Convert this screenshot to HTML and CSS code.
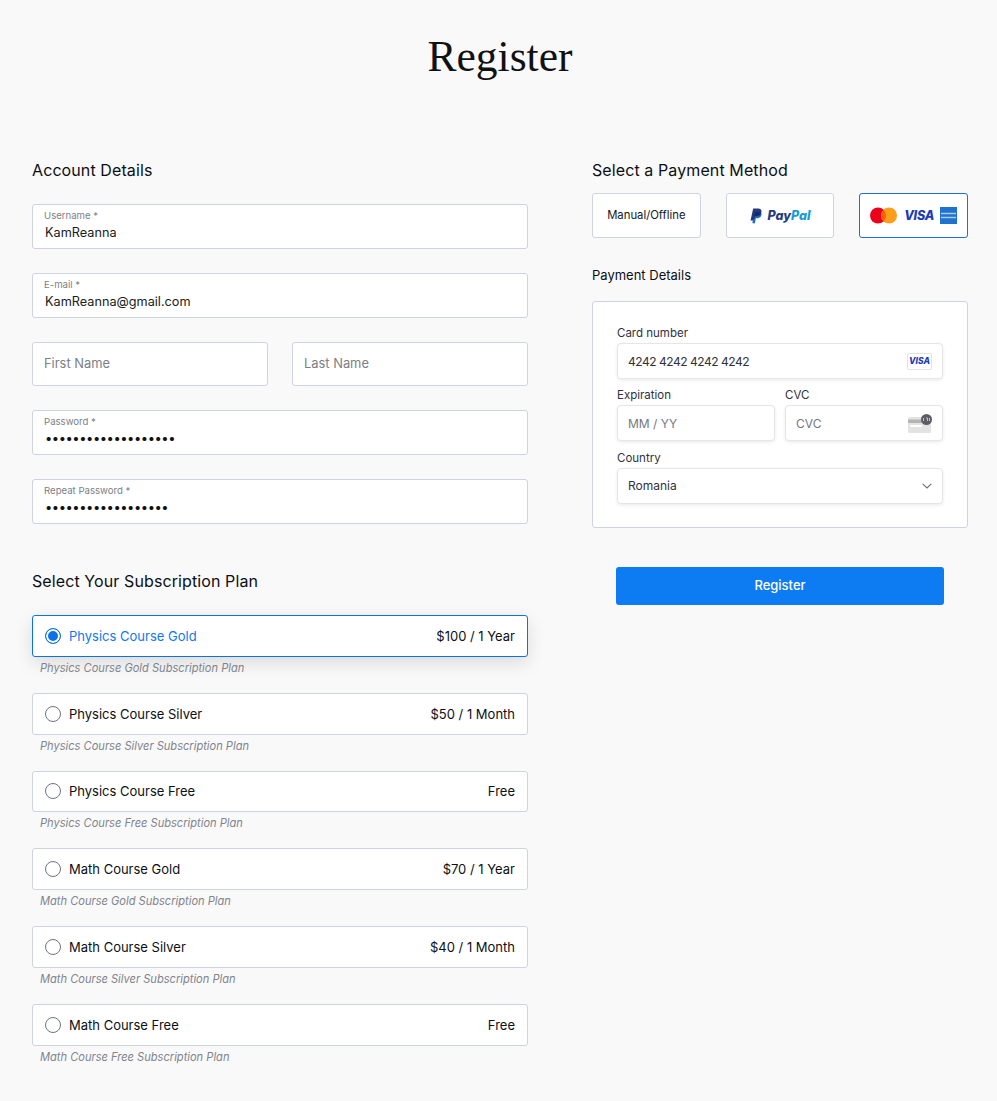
FILE: index.html
```html
<!DOCTYPE html>
<html lang="en">
<head>
<meta charset="utf-8">
<title>Register</title>
<link rel="stylesheet" href="styles.css">
</head>
<body>
<h1 class="title">Register</h1>
<main class="columns">
  <section class="col-left">
    <h2 class="heading">Account Details</h2>
    <div class="fields">
      <div class="field"><span class="field-label">Username *</span><span class="field-value">KamReanna</span></div>
      <div class="field"><span class="field-label">E-mail *</span><span class="field-value">KamReanna@gmail.com</span></div>
      <div class="name-row">
        <div class="field field-empty">First Name</div>
        <div class="field field-empty">Last Name</div>
      </div>
      <div class="field"><span class="field-label">Password *</span><span class="field-value dots">•••••••••••••••••••</span></div>
      <div class="field"><span class="field-label">Repeat Password *</span><span class="field-value dots">••••••••••••••••••</span></div>
    </div>
    <h2 class="heading plans-heading">Select Your Subscription Plan</h2>
    <div class="plans">
      <div class="plan">
        <div class="plan-card plan-active"><span class="radio radio-on"></span><span class="plan-name">Physics Course Gold</span><span class="plan-price">$100 / 1 Year</span></div>
        <p class="plan-desc">Physics Course Gold Subscription Plan</p>
      </div>
      <div class="plan">
        <div class="plan-card"><span class="radio"></span><span class="plan-name">Physics Course Silver</span><span class="plan-price">$50 / 1 Month</span></div>
        <p class="plan-desc">Physics Course Silver Subscription Plan</p>
      </div>
      <div class="plan">
        <div class="plan-card"><span class="radio"></span><span class="plan-name">Physics Course Free</span><span class="plan-price">Free</span></div>
        <p class="plan-desc">Physics Course Free Subscription Plan</p>
      </div>
      <div class="plan">
        <div class="plan-card"><span class="radio"></span><span class="plan-name">Math Course Gold</span><span class="plan-price">$70 / 1 Year</span></div>
        <p class="plan-desc">Math Course Gold Subscription Plan</p>
      </div>
      <div class="plan">
        <div class="plan-card"><span class="radio"></span><span class="plan-name">Math Course Silver</span><span class="plan-price">$40 / 1 Month</span></div>
        <p class="plan-desc">Math Course Silver Subscription Plan</p>
      </div>
      <div class="plan">
        <div class="plan-card"><span class="radio"></span><span class="plan-name">Math Course Free</span><span class="plan-price">Free</span></div>
        <p class="plan-desc">Math Course Free Subscription Plan</p>
      </div>
    </div>
  </section>
  <section class="col-right">
    <h2 class="heading">Select a Payment Method</h2>
    <div class="methods">
      <div class="method method-text">Manual/Offline</div>
      <div class="method">
        <svg class="pp-icon" viewBox="0 0 24 28" width="14" height="16" aria-hidden="true">
          <path fill="#253b80" d="M7 1h8.500c4.600 0 6.800 2.400 6 6.400-.9 4.600-4 7-8.400 7H9.700L8.300 22H2.500z"/>
          <path fill="#1a6fb5" d="M9.500 7h8c2.600 0 4.600 1.300 4.200 4.300-.6 4.300-3.700 6.700-7.700 6.700h-2.500l-1.200 8.500H5.700l1.100-7.500z"/>
          <path fill="#1b2a6b" d="M9.500 7h8c1.500 0 2.800.4 3.600 1.400-.9 3.800-3.900 6-8 6H9.700L8.700 20 6.800 19z"/>
        </svg>
        <span class="pp-text"><span class="pp-pay">Pay</span><span class="pp-pal">Pal</span></span>
      </div>
      <div class="method method-active">
        <svg viewBox="0 0 27 17" width="27" height="17" aria-hidden="true">
          <circle cx="8" cy="8.500" r="8" fill="#eb001b"/>
          <circle cx="19" cy="8.500" r="8" fill="#ff9e1b"/>
          <path fill="#ff5f00" d="M13.500 2.700a8 8 0 0 1 0 11.600 8 8 0 0 1 0-11.600z"/>
        </svg>
        <span class="visa">VISA</span>
        <svg viewBox="0 0 17 17" width="17" height="17" aria-hidden="true">
          <rect width="17" height="17" fill="#1f72cd"/>
          <path stroke="#a9cdf0" stroke-width="1.500" d="M1 6.500h15M1 10.500h15"/>
        </svg>
      </div>
    </div>
    <h3 class="subheading">Payment Details</h3>
    <div class="pay-box">
      <div class="pay-field">
        <span class="pay-label">Card number</span>
        <div class="pay-input"><span class="card-digits">4242 4242 4242 4242</span><span class="visa-badge">VISA</span></div>
      </div>
      <div class="pay-row">
        <div class="pay-field">
          <span class="pay-label">Expiration</span>
          <div class="pay-input placeholder"><span>MM / YY</span></div>
        </div>
        <div class="pay-field">
          <span class="pay-label">CVC</span>
          <div class="pay-input placeholder"><span>CVC</span>
            <svg viewBox="0 0 24 19" width="24" height="19" aria-hidden="true">
              <rect y="3" width="23" height="16" rx="1.500" fill="#e3e3e3"/>
              <rect y="5.500" width="20" height="3.500" fill="#b4b4b4"/>
              <rect x="2" y="11" width="12" height="2" fill="#fff"/>
              <circle cx="18.500" cy="5.500" r="5.500" fill="#5c5c66"/>
              <path d="M15.500 4v3M18 4h1.500v3M21.500 4v3" stroke="#ddd" stroke-width=".8" fill="none"/>
            </svg>
          </div>
        </div>
      </div>
      <div class="pay-field">
        <span class="pay-label">Country</span>
        <div class="pay-input"><span>Romania</span>
          <svg viewBox="0 0 10 6" width="10" height="6" aria-hidden="true"><path d="M.7.8 5 5l4.300-4.200" fill="none" stroke="#6d6e78" stroke-width="1.100"/></svg>
        </div>
      </div>
    </div>
    <button class="submit" type="button">Register</button>
  </section>
</main>
</body>
</html>
```
FILE: styles.css
```css
* { box-sizing: border-box; }
html, body { margin: 0; padding: 0; }
body {
  background: #f9f9fa;
  color: #0c0f14;
  font-family: Inter, "Liberation Sans", sans-serif;
  height: 1101px;
  overflow: hidden;
}
.title {
  margin: 0;
  padding: 29px 0 0 3px;
  height: 160px;
  text-align: center;
  font-family: "Liberation Serif", serif;
  font-weight: 400;
  font-size: 43.500px;
  line-height: 54px;
  color: #111;
}
.columns {
  display: flex;
  gap: 64px;
  padding: 0 29px 0 32px;
}
.col-left { width: 496px; }
.col-right { width: 376px; }
.heading {
  margin: 0;
  font-size: 16px;
  font-weight: 420;
  letter-spacing: .1px;
  line-height: 20px;
}
.fields {
  margin-top: 24px;
  display: flex;
  flex-direction: column;
  gap: 24px;
}
.field {
  height: 45px;
  background: #fff;
  border: 1px solid #cfd2e0;
  border-radius: 3px;
  padding: 5px 11px 0;
  display: flex;
  flex-direction: column;
}
.field-label {
  font-size: 9.600px;
  line-height: 12px;
  color: #7b7f87;
}
.field-value {
  margin: 1px 0 0 1px;
  font-size: 12.700px;
  line-height: 20px;
  color: #1a1d21;
}
.dots {
  font-size: 13px;
  line-height: 18px;
  letter-spacing: -.47px;
  color: #111;
}
.name-row {
  display: flex;
  gap: 24px;
}
.field-empty {
  flex: 1;
  height: 44px;
  padding: 0 11px 2px;
  justify-content: center;
  font-size: 12.900px;
  color: #7b7f87;
}
.plans-heading { margin-top: 47px; }
.plans {
  margin-top: 24px;
  display: flex;
  flex-direction: column;
  gap: 15.800px;
}
.plan { height: 62px; }
.plan-card {
  height: 41.800px;
  background: #fff;
  border: 1px solid #cfd2e0;
  border-radius: 3px;
  padding: 0 12px;
  display: flex;
  align-items: center;
  font-size: 13px;
  color: #0c0f14;
}
.plan-active {
  border-color: #0d72e8;
  color: #1477f0;
  box-shadow: 0 6px 18px rgba(0, 0, 0, .12);
}
.plan-active .plan-price { color: #0c0f14; }
.radio {
  width: 16px;
  height: 16px;
  border: 1.200px solid #6e7380;
  border-radius: 50%;
  margin-right: 8px;
  flex: none;
}
.radio-on {
  border: 1.500px solid #0d72e8;
  background: #0d72e8;
  box-shadow: inset 0 0 0 2px #fff;
}
.plan-name { flex: 1; }
.plan-desc {
  margin: 4px 0 0 8px;
  font-size: 11.100px;
  line-height: 15px;
  font-style: italic;
  color: #80848c;
}
.methods {
  margin-top: 13px;
  display: flex;
  gap: 25px;
}
.method {
  flex: 1 1 0;
  min-width: 0;
  height: 45px;
  background: #fff;
  border: 1px solid #cfd2e0;
  border-radius: 3px;
  display: flex;
  align-items: center;
  justify-content: center;
  gap: 4px;
}
.method-text {
  padding-bottom: 1px;
  font-size: 11.300px;
  color: #14171c;
}
.method-active {
  border-color: #1a6fdc;
  gap: 6px;
}
.pp-text {
  font-size: 12.500px;
  font-weight: 800;
  font-style: italic;
}
.pp-pay { color: #253b80; }
.pp-pal { color: #179bd7; }
.visa {
  margin-left: 1px;
  padding-bottom: 1px;
  font-size: 12.500px;
  font-weight: 800;
  font-style: italic;
  color: #1a3bb8;
  letter-spacing: -.2px;
}
.subheading {
  margin: 27px 0 0;
  font-size: 13px;
  line-height: 20px;
  font-weight: 430;
}
.pay-box {
  margin-top: 16px;
  height: 227px;
  background: #fff;
  border: 1px solid #cfd2e0;
  border-radius: 3px;
  padding: 23px 24px 0;
  display: flex;
  flex-direction: column;
  gap: 8.300px;
}
.pay-row {
  display: flex;
  gap: 10px;
}
.pay-row .pay-field { flex: 1; }
.pay-field {
  display: flex;
  flex-direction: column;
  gap: 2px;
}
.pay-label {
  font-size: 11.500px;
  line-height: 16px;
  color: #30313d;
}
.pay-input {
  height: 36px;
  border: 1px solid #e6e6e6;
  border-radius: 4px;
  padding: 0 10px;
  display: flex;
  align-items: center;
  justify-content: space-between;
  font-size: 12px;
  color: #30313d;
  background: #fff;
  box-shadow: 0 1px 3px rgba(0, 0, 0, .06), 0 2px 5px rgba(0, 0, 0, .03);
}
.card-digits { letter-spacing: -.47px; }
.placeholder { color: #757680; }
.visa-badge {
  width: 25px;
  height: 17px;
  border: 1px solid #e3e3e3;
  border-radius: 2px;
  font-size: 8.500px;
  line-height: 15px;
  font-weight: 800;
  font-style: italic;
  text-align: center;
  color: #1a3bb8;
}
.submit {
  display: block;
  margin: 39px 0 0 24px;
  padding: 0 0 2px;
  width: 328px;
  height: 38px;
  border: 0;
  border-radius: 3px;
  background: #0d7bf2;
  color: #fff;
  font-family: inherit;
  font-size: 13px;
  font-weight: 500;
}
```
